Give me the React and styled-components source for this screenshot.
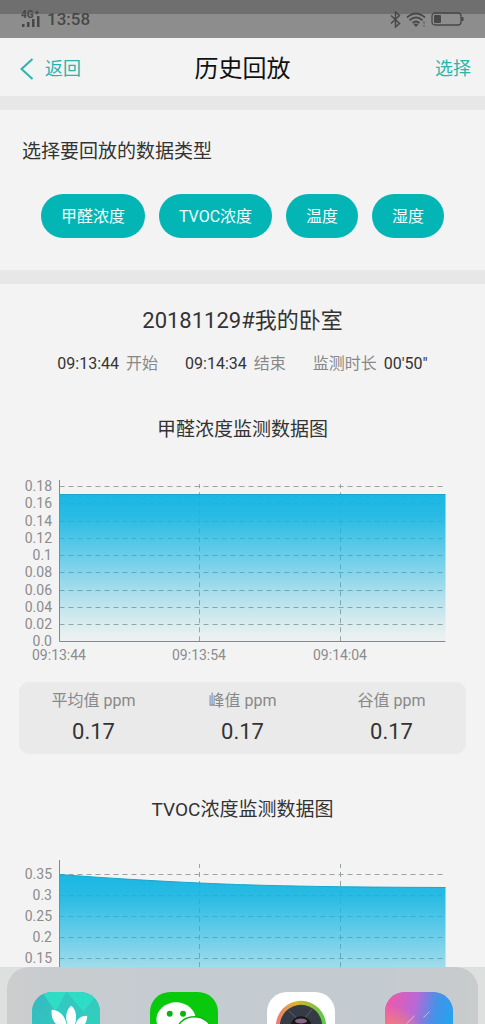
import React from "react";
import styled, { createGlobalStyle } from "styled-components";

const Global = createGlobalStyle`
  * { box-sizing: border-box; }
  body { margin: 0; background: #f3f3f3; font-family: Roboto, "Noto Sans CJK SC", sans-serif; color: #333; }
  h1, h2, h3, p, dl, dd { margin: 0; font-weight: 400; }
  button { font: inherit; border: 0; margin: 0; }
`;

const Screen = styled.div`
  display: flex;
  flex-direction: column;
  height: 100vh;
  overflow: hidden;
`;

const StatusBar = styled.header`
  display: flex;
  align-items: center;
  justify-content: space-between;
  flex: none;
  height: 38px;
  padding: 0 21px;
  background: linear-gradient(#6f6f6f 0 14px, #8d8d8d 14px);
  color: #484848;
`;

const StatusGroup = styled.div`
  display: flex;
  align-items: center;
  gap: 5px;
  font-size: 17px;
  font-weight: 500;
  line-height: 20px;
`;

const NavBar = styled.nav`
  display: grid;
  grid-template-columns: 1fr auto 1fr;
  align-items: center;
  flex: none;
  height: 58px;
  padding: 4px 14px 0;
`;

const NavLink = styled.a`
  display: flex;
  align-items: center;
  gap: 11px;
  justify-self: ${(p) => p.$side};
  padding-left: 6px;
  color: #2db3ad;
  font-size: 18px;
  line-height: 28px;
  text-decoration: none;
`;

const Title = styled.h1`
  color: #111;
  font-size: 24px;
  line-height: 36px;
`;

const Content = styled.main`
  flex: 1;
  min-height: 0;
  overflow-y: auto;
  scrollbar-width: none;
`;

const TypePanel = styled.section`
  border-top: 14px solid #e7e7e7;
  border-bottom: 14px solid #e7e7e7;
  padding: 28px 22px 32px;
`;

const PanelTitle = styled.h2`
  font-size: 19px;
  line-height: 28px;
`;

const Pills = styled.div`
  display: flex;
  justify-content: center;
  gap: 14px;
  margin-top: 28px;
`;

const Pill = styled.button`
  height: 44px;
  padding: 2px 20px 0;
  border-radius: 22px;
  background: #04b5b5;
  color: #f0ffff;
  font-size: 16px;
  line-height: 24px;
  white-space: nowrap;
`;

const RecordTitle = styled.h2`
  margin-top: 21px;
  font-size: 22px;
  line-height: 32px;
  text-align: center;
`;

const Times = styled.div`
  display: flex;
  justify-content: center;
  gap: 27px;
  margin-top: 15px;
  font-size: 16px;
  line-height: 24px;
`;

const TimeItem = styled.p`
  display: flex;
  gap: 7px;
  white-space: nowrap;
`;

const Muted = styled.span`
  color: #888;
`;

const ChartSection = styled.section`
  padding-top: 40px;
`;

const ChartTitle = styled.h3`
  font-size: 19px;
  line-height: 28px;
  text-align: center;
`;

const ChartSvg = styled.svg`
  display: block;
  width: 100%;
  margin-top: 36px;
  overflow: visible;
  font-size: 14px;
  fill: #8c8c8c;
`;

const Stats = styled.dl`
  display: grid;
  grid-template-columns: repeat(3, 1fr);
  margin: 18px 19px 2px;
  padding: 5px 0;
  border-radius: 10px;
  background: #eaeaea;
  text-align: center;
`;

const StatLabel = styled.dt`
  color: #888;
  font-size: 16px;
  line-height: 28px;
`;

const StatValue = styled.dd`
  font-size: 22px;
  line-height: 34px;
`;

const DockArea = styled.footer`
  flex: none;
  height: 57px;
  padding: 0 7px;
  overflow: hidden;
  background: #dedfdf;
`;

const Dock = styled.div`
  display: flex;
  justify-content: space-between;
  height: 110px;
  padding: 25px 25px 0;
  border-radius: 22px;
  background: linear-gradient(90deg, #cbcdce, #c4cbd1 35%, #c4cbd0 80%, #c9cbcc);
`;

const AppButton = styled.button`
  width: 68px;
  height: 68px;
  padding: 0;
  overflow: hidden;
  border-radius: 20px;
  background: ${(p) => p.$bg};

  svg { display: block; }
`;

const LEFT = 59.5;
const RIGHT = 445.5;
const TICKS_X = [199.5, 340.5];

function Chart({ id, labels, first, step, line, times }) {
  const bottom = first + step * (labels.length - 1);
  return (
    <ChartSvg viewBox={`0 0 485 ${Math.round(bottom + 23)}`} role="img" aria-label="监测数据图">
      <defs>
        <linearGradient id={id} x1="0" y1="0" x2="0" y2="1">
          <stop offset="0" stopColor="#13b5e2" stopOpacity="0.97" />
          <stop offset="0.15" stopColor="#13b5e2" stopOpacity="0.9" />
          <stop offset="0.5" stopColor="#13b5e2" stopOpacity="0.52" />
          <stop offset="0.8" stopColor="#20b5d8" stopOpacity="0.2" />
          <stop offset="1" stopColor="#60d0c0" stopOpacity="0.04" />
        </linearGradient>
      </defs>
      <g stroke="#9aa3a6" strokeDasharray="5 4">
        {labels.slice(0, -1).map((l, i) => (
          <path key={l} d={`M${LEFT} ${Math.round(first + i * step) + 0.5}H${RIGHT}`} />
        ))}
        {TICKS_X.map((x) => (
          <path key={x} d={`M${x} ${bottom}V4`} />
        ))}
      </g>
      <path d={`${line} V${bottom} H${LEFT} Z`} fill={`url(#${id})`} />
      <path d={line} fill="none" stroke="#18a7ca" />
      <path d={`M${LEFT} 0V${bottom + 0.25}H${RIGHT}`} fill="none" stroke="#7c8b90" />
      {labels.map((l, i) => (
        <text key={l} x="52" y={Math.round(first + i * step) + 5} textAnchor="end">{l}</text>
      ))}
      {times.map((t, i) => (
        <text key={t} x={[59, 199, 340][i]} y={bottom + 19} textAnchor="middle">{t}</text>
      ))}
    </ChartSvg>
  );
}

const TIMES = ["09:13:44", "09:13:54", "09:14:04"];

const SignalIcon = () => (
  <svg width="21" height="18" viewBox="0 0 21 18" fill="#484848" aria-label="4G+">
    <text x="0" y="8" fontSize="10" fontWeight="700">4G</text>
    <path d="M1 14h2.500v3H1zM6 12h2.500v5H6zM11 9h2.500v8H11zM16 6h2.500v11H16zM14 2h4v1.200h-4zM15.400 .6h1.200v4h-1.200z" />
  </svg>
);

const BluetoothIcon = () => (
  <svg width="11" height="17" viewBox="0 0 11 17" fill="none" stroke="#484848" strokeWidth="1.500">
    <path d="M1 4.500l8.500 8L5.500 16V1l4 3.500-8.500 8" />
  </svg>
);

const WifiIcon = () => (
  <svg width="20" height="15" viewBox="0 0 20 15" fill="none" stroke="#484848" strokeWidth="1.700">
    <path d="M1 5.500Q10-2.500 19 5.500M3.500 8.300Q10 2.500 16.500 8.300M6.500 11Q10 8 13.500 11" />
    <path d="M8 12.200h4L10 14.500zM18 9.500v2M18 13v1.500" fill="#484848" strokeWidth="1" />
  </svg>
);

const BatteryIcon = () => (
  <svg width="33" height="14" viewBox="0 0 33 14" fill="none" stroke="#484848" strokeWidth="1.300">
    <rect x="1" y="1" width="29" height="12" rx="3" />
    <rect x="3" y="3" width="7" height="8" rx="1" fill="#484848" stroke="none" />
    <path d="M31.500 5v4" strokeWidth="2" />
  </svg>
);

const FlowerIcon = () => (
  <svg width="68" height="68" viewBox="0 0 69 69">
    <defs>
      <linearGradient id="flower" x1="0" y1="0" x2="1" y2="1">
        <stop offset="0" stopColor="#35b9c0" />
        <stop offset="1" stopColor="#2fd9bc" />
      </linearGradient>
    </defs>
    <rect width="69" height="69" fill="url(#flower)" />
    <path d="M10 0h25L24 20zM35 0h34L52 20z" fill="#2fdcc6" />
    <path d="M24 20L35 0l17 20-10 24z" fill="#32c9c1" />
    <g fill="#fff">
      <path d="M39.500 14c5 3 6.500 11 4 19l-3 7-4-6c-3-7-2.500-15 3-20z" />
      <path d="M20 18c7 .5 12 5 14 11l3 10-8-3c-7-4-10-10-9-18z" />
      <path d="M56 24c-6 0-10 3-11.500 8L42 41l7-4c5-3 7-8 7-13z" />
    </g>
  </svg>
);

const ChatIcon = () => (
  <svg width="68" height="68" viewBox="0 0 69 69">
    <ellipse cx="26.500" cy="28" rx="20" ry="17.500" fill="#fff" />
    <circle cx="20" cy="22" r="3" fill="#08b50b" />
    <circle cx="33.500" cy="22" r="3" fill="#08b50b" />
    <ellipse cx="45" cy="41" rx="18" ry="16" fill="#fff" stroke="#08b50b" strokeWidth="1.500" />
  </svg>
);

const CameraIcon = () => (
  <svg width="68" height="68" viewBox="0 0 69 69">
    <defs>
      <linearGradient id="ring">
        <stop offset="0" stopColor="#f17676" />
        <stop offset="0.4" stopColor="#ddb32b" />
        <stop offset="1" stopColor="#53cc49" />
      </linearGradient>
    </defs>
    <circle cx="34.500" cy="34.500" r="25.500" fill="url(#ring)" />
    <circle cx="34.500" cy="34.500" r="21.500" fill="#343b45" />
    <path d="M22 19l13 12 11-14" fill="none" stroke="#59626c" strokeWidth="1" />
    <circle cx="34.500" cy="35" r="10.500" fill="#17161c" />
    <ellipse cx="34.500" cy="29.500" rx="6" ry="2.500" fill="#85657f" />
  </svg>
);

const GalleryIcon = () => (
  <svg width="68" height="68" viewBox="0 0 69 69">
    <defs>
      <linearGradient id="gallery" x1="0" y1="0.300" x2="1" y2="0.500">
        <stop offset="0" stopColor="#ef59a9" />
        <stop offset="0.4" stopColor="#b968d6" />
        <stop offset="0.7" stopColor="#4692e7" />
        <stop offset="1" stopColor="#20a5f0" />
      </linearGradient>
      <radialGradient id="warm" cx="0.1" cy="0.7" r="0.5">
        <stop offset="0" stopColor="#ff8f5b" />
        <stop offset="1" stopColor="#ff8f5b" stopOpacity="0" />
      </radialGradient>
    </defs>
    <rect width="69" height="69" fill="url(#gallery)" />
    <rect width="69" height="69" fill="url(#warm)" />
    <path d="M22 32l8-8M39 26l6-6" stroke="#fff" strokeOpacity="0.5" />
  </svg>
);

export default function App() {
  return (
    <Screen>
      <Global />
      <StatusBar>
        <StatusGroup>
          <SignalIcon />
          <span>13:58</span>
        </StatusGroup>
        <StatusGroup>
          <BluetoothIcon />
          <WifiIcon />
          <BatteryIcon />
        </StatusGroup>
      </StatusBar>
      <NavBar>
        <NavLink href="#back" $side="start">
          <svg width="14" height="22" viewBox="0 0 14 22" fill="none" stroke="#2db3ad" strokeWidth="2">
            <path d="M12.500 1L1.500 11l11 10" />
          </svg>
          返回
        </NavLink>
        <Title>历史回放</Title>
        <NavLink href="#select" $side="end">选择</NavLink>
      </NavBar>
      <Content>
        <TypePanel>
          <PanelTitle>选择要回放的数据类型</PanelTitle>
          <Pills>
            {["甲醛浓度", "TVOC浓度", "温度", "湿度"].map((t) => (
              <Pill key={t} type="button">{t}</Pill>
            ))}
          </Pills>
        </TypePanel>
        <RecordTitle>20181129#我的卧室</RecordTitle>
        <Times>
          <TimeItem>09:13:44 <Muted>开始</Muted></TimeItem>
          <TimeItem>09:14:34 <Muted>结束</Muted></TimeItem>
          <TimeItem><Muted>监测时长</Muted> 00'50"</TimeItem>
        </Times>
        <ChartSection>
          <ChartTitle>甲醛浓度监测数据图</ChartTitle>
          <Chart
            id="hcho"
            labels={["0.18", "0.16", "0.14", "0.12", "0.1", "0.08", "0.06", "0.04", "0.02", "0.0"]}
            first={6}
            step={17.25}
            line="M59.500 14.500H445.500"
            times={TIMES}
          />
          <Stats>
            {["平均值 ppm", "峰值 ppm", "谷值 ppm"].map((l) => (
              <div key={l}>
                <StatLabel>{l}</StatLabel>
                <StatValue>0.17</StatValue>
              </div>
            ))}
          </Stats>
        </ChartSection>
        <ChartSection>
          <ChartTitle>TVOC浓度监测数据图</ChartTitle>
          <Chart
            id="tvoc"
            labels={["0.35", "0.3", "0.25", "0.2", "0.15", "0.1", "0.05", "0.0"]}
            first={14}
            step={21}
            line="M59.500 14.500C105 18 155 21 199.500 23S300 27 445.500 27.500"
            times={TIMES}
          />
        </ChartSection>
      </Content>
      <DockArea>
        <Dock>
          <AppButton type="button" aria-label="管家" $bg="#35c6c0"><FlowerIcon /></AppButton>
          <AppButton type="button" aria-label="微信" $bg="#08c90b"><ChatIcon /></AppButton>
          <AppButton type="button" aria-label="相机" $bg="#fff"><CameraIcon /></AppButton>
          <AppButton type="button" aria-label="相册" $bg="#a568dc"><GalleryIcon /></AppButton>
        </Dock>
      </DockArea>
    </Screen>
  );
}
